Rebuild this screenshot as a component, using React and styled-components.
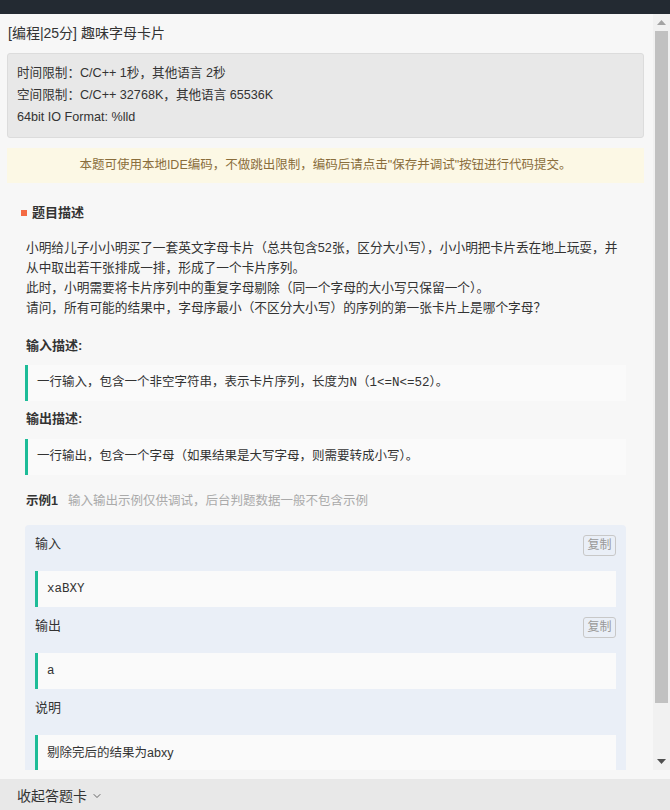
import React from "react";
import styled, { createGlobalStyle } from "styled-components";
import { ChevronDown } from "lucide-react";

const Global = createGlobalStyle`
  html, body { margin: 0; padding: 0; }
  body {
    font-family: "Liberation Sans", "Noto Sans CJK SC", sans-serif;
    color: #333;
    background: #f7f7f7;
  }
  * { box-sizing: border-box; }
`;

const Page = styled.div`
  width: 670px;
  height: 810px;
  display: flex;
  flex-direction: column;
  background: #f7f7f7;
`;

const TopBar = styled.div`
  height: 14px;
  flex: none;
  background: #232a32;
`;

const Main = styled.div`
  flex: none;
  height: 765px;
  padding-bottom: 9px;
  background: #f7f7f7;
`;

const Viewport = styled.div`
  height: 756px;
  display: flex;
  background: #f7f7f7;
`;

const ScrollContent = styled.div`
  flex: 1;
  min-width: 0;
  overflow: hidden;
`;

const ScrollBar = styled.div`
  width: 17px;
  flex: none;
  display: flex;
  flex-direction: column;
  background: #f1f1f1;
`;

const ScrollButton = styled.div`
  height: 17px;
  flex: none;
  display: flex;
  align-items: center;
  justify-content: center;
`;

const Track = styled.div`
  flex: 1;
  padding: 0 2px;
`;

const Thumb = styled.div`
  height: 672px;
  background: #c1c1c1;
`;

const Content = styled.div`
  padding: 9px 9px 46px 7px;
`;

const Title = styled.div`
  font-size: 14px;
  line-height: 20px;
  padding-left: 1px;
`;

const InfoBox = styled.div`
  margin-top: 10px;
  background: #e8e8e8;
  border: 1px solid #dcdcdc;
  border-radius: 3px;
  padding: 8px 9px 9px;
  font-size: 12.6px;
  line-height: 22px;
`;

const Notice = styled.div`
  margin-top: 10px;
  background: #fcf8e5;
  color: #8a6d3b;
  font-size: 12.5px;
  line-height: 19px;
  padding: 8px 10px;
  text-align: center;
`;

const Section = styled.div`
  padding-left: 18px;
  padding-right: 18px;
`;

const SectionTitle = styled.div`
  margin-top: 20px;
  display: flex;
  align-items: center;
  gap: 5px;
  font-size: 13px;
  font-weight: bold;
  line-height: 20px;
  padding-left: 14px;
  &::before {
    content: "";
    width: 6px;
    height: 6px;
    background: #f46a43;
  }
`;

const Paragraph = styled.div`
  margin-top: 15px;
  font-size: 12.7px;
  line-height: 20px;
  padding-left: 1px;
`;

const SubTitle = styled.div`
  margin-top: ${(p) => p.$mt}px;
  font-size: 13px;
  font-weight: bold;
  line-height: 20px;
  padding-left: 1px;
`;

const Quote = styled.div`
  margin-top: ${(p) => p.$mt}px;
  background: #fafafa;
  border-left: 3px solid #1dbc98;
  padding: 8px 9px;
  font-family: "Liberation Sans", "Noto Sans CJK SC", sans-serif;
  font-size: 12.5px;
  line-height: 20px;
  color: #333;
  white-space: pre-wrap;
`;

const CodeQuote = styled(Quote)`
  font-family: "Liberation Mono", "Noto Sans CJK SC", monospace;
`;

const ExampleHead = styled.div`
  margin-top: 16px;
  display: flex;
  gap: 10px;
  font-size: 12.5px;
  line-height: 20px;
  padding-left: 1px;
`;

const Strong = styled.span`
  font-weight: bold;
`;

const Hint = styled.span`
  color: #aaa;
`;

const ExampleBox = styled.div`
  margin-top: 14px;
  background: #eaeff7;
  border-radius: 4px;
  padding: 10px 10px 10px;
`;

const LabelRow = styled.div`
  margin-top: ${(p) => p.$mt}px;
  display: flex;
  justify-content: space-between;
  align-items: center;
  height: 21px;
  font-size: 13px;
`;

const Label = styled.span`
  position: relative;
  top: -3px;
`;

const CopyBtn = styled.button`
  width: 33px;
  height: 21px;
  padding: 0;
  border: 1px solid #c8c8c8;
  border-radius: 3px;
  background: transparent;
  color: #999;
  font-family: "Liberation Sans", "Noto Sans CJK SC", sans-serif;
  font-size: 12px;
  line-height: 19px;
`;

const Footer = styled.div`
  flex: none;
  height: 31px;
  background: #e8e8e8;
  display: flex;
  align-items: center;
  gap: 4px;
  padding-left: 17px;
  font-size: 14px;
  color: #333;
`;

const FooterIcon = styled.span`
  display: flex;
  position: relative;
  top: 1px;
`;

function Arrow({ down }) {
  return (
    <svg width="9" height="5" viewBox="0 0 9 5">
      <polygon
        points={down ? "0,0 9,0 4.5,5" : "0,5 9,5 4.5,0"}
        fill={down ? "#505050" : "#a3a3a3"}
      />
    </svg>
  );
}

export default function App() {
  return (
    <>
      <Global />
      <Page>
        <TopBar />
        <Main>
          <Viewport>
            <ScrollContent>
              <Content>
                <Title>[编程|25分] 趣味字母卡片</Title>
                <InfoBox>
                  <div>时间限制：C/C++ 1秒，其他语言 2秒</div>
                  <div>空间限制：C/C++ 32768K，其他语言 65536K</div>
                  <div>64bit IO Format: %lld</div>
                </InfoBox>
                <Notice>本题可使用本地IDE编码，不做跳出限制，编码后请点击"保存并调试"按钮进行代码提交。</Notice>
                <SectionTitle>题目描述</SectionTitle>
                <Section>
                  <Paragraph>
                    小明给儿子小小明买了一套英文字母卡片（总共包含52张，区分大小写），小小明把卡片丢在地上玩耍，并从中取出若干张排成一排，形成了一个卡片序列。
                    <br />
                    此时，小明需要将卡片序列中的重复字母剔除（同一个字母的大小写只保留一个）。
                    <br />
                    请问，所有可能的结果中，字母序最小（不区分大小写）的序列的第一张卡片上是哪个字母？
                  </Paragraph>
                  <SubTitle $mt={18}>输入描述:</SubTitle>
                  <CodeQuote $mt={9}>一行输入，包含一个非空字符串，表示卡片序列，长度为N（1&lt;=N&lt;=52）。</CodeQuote>
                  <SubTitle $mt={8}>输出描述:</SubTitle>
                  <CodeQuote $mt={10}>一行输出，包含一个字母（如果结果是大写字母，则需要转成小写）。</CodeQuote>
                  <ExampleHead>
                    <Strong>示例1</Strong>
                    <Hint>输入输出示例仅供调试，后台判题数据一般不包含示例</Hint>
                  </ExampleHead>
                  <ExampleBox>
                    <LabelRow $mt={0}>
                      <Label>输入</Label>
                      <CopyBtn>复制</CopyBtn>
                    </LabelRow>
                    <CodeQuote $mt={15}>xaBXY</CodeQuote>
                    <LabelRow $mt={10}>
                      <Label>输出</Label>
                      <CopyBtn>复制</CopyBtn>
                    </LabelRow>
                    <CodeQuote $mt={15}>a</CodeQuote>
                    <LabelRow $mt={10}>
                      <Label>说明</Label>
                    </LabelRow>
                    <Quote $mt={15}>剔除完后的结果为abxy</Quote>
                  </ExampleBox>
                </Section>
              </Content>
            </ScrollContent>
            <ScrollBar>
              <ScrollButton>
                <Arrow />
              </ScrollButton>
              <Track>
                <Thumb />
              </Track>
              <ScrollButton>
                <Arrow down />
              </ScrollButton>
            </ScrollBar>
          </Viewport>
        </Main>
        <Footer>
          收起答题卡
          <FooterIcon>
            <ChevronDown size={12} strokeWidth={1.8} color="#555" />
          </FooterIcon>
        </Footer>
      </Page>
    </>
  );
}
